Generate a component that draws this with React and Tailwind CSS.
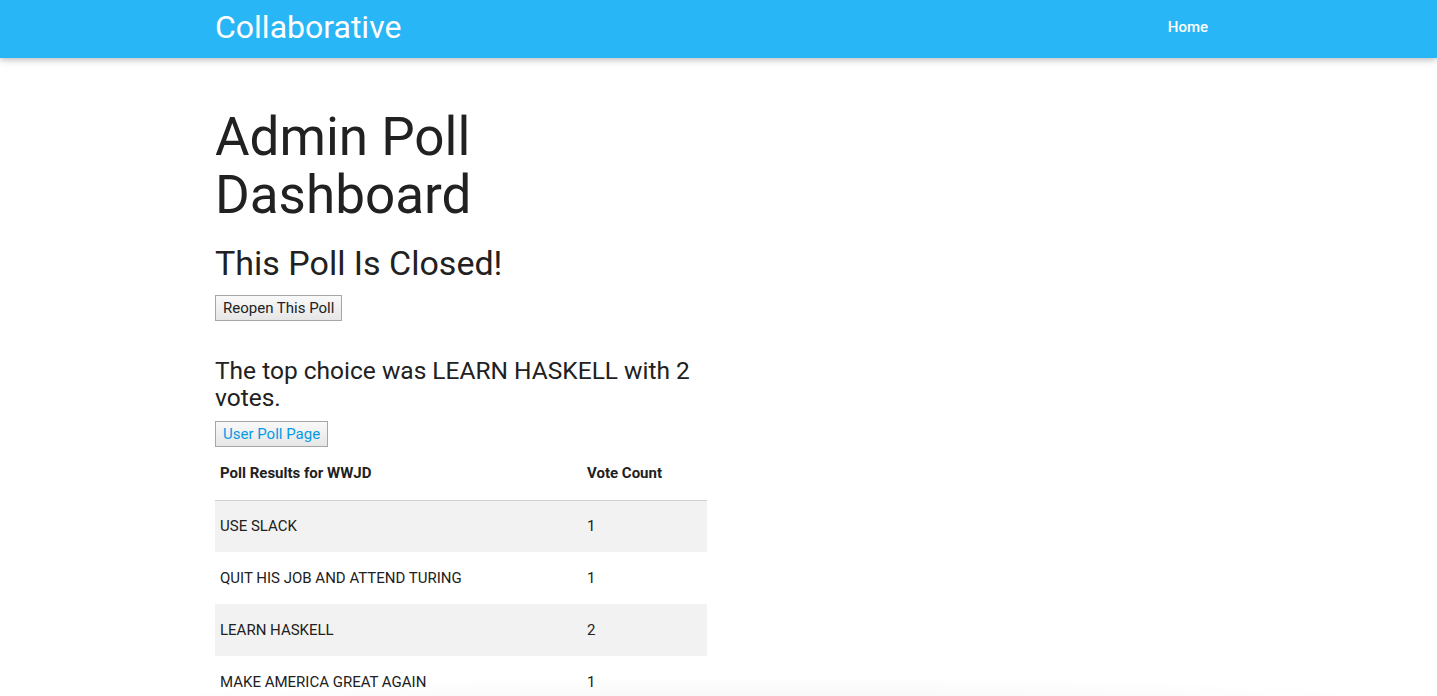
import React from "react";

const rows = [
  ["USE SLACK", "1"],
  ["QUIT HIS JOB AND ATTEND TURING", "1"],
  ["LEARN HASKELL", "2"],
  ["MAKE AMERICA GREAT AGAIN", "1"],
];

export default function App() {
  return (
    <div className="min-h-screen bg-white text-[#212121]" style={{ fontFamily: "Roboto, 'Noto Sans', sans-serif" }}>
      <nav className="h-[58px] bg-[#29b6f6] shadow-[0_2px_5px_0_rgba(0,0,0,0.16),0_2px_10px_0_rgba(0,0,0,0.12)]">
        <div className="mx-auto flex h-full w-[1007px] items-center justify-between pb-[4px]">
          <a className="text-[32px] leading-[48px] text-white">Collaborative</a>
          <a className="mr-[14px] text-[15px] font-medium text-white">Home</a>
        </div>
      </nav>

      <main className="mx-auto w-[1007px]">
        <div className="w-[492px]">
          <h1 className="mt-[50px] w-[300px] text-[53px] font-normal leading-[58px]">Admin Poll Dashboard</h1>
          <h4 className="mt-[19px] text-[34px] font-normal leading-[40px]">This Poll Is Closed!</h4>
          <button className="mt-[12px] h-[26px] border border-[#a6a6a6] bg-gradient-to-b from-[#f9f9f9] to-[#e6e6e6] px-[7px] text-[15px] text-[#222]">
            Reopen This Poll
          </button>
          <h5 className="mt-[36px] text-[24.5px] font-normal leading-[27px]">
            The top choice was LEARN HASKELL with 2 votes.
          </h5>
          <button className="mt-[10px] h-[26px] border border-[#a6a6a6] bg-gradient-to-b from-[#f9f9f9] to-[#e6e6e6] px-[7px] text-[15px] text-[#039be5]">
            User Poll Page
          </button>
          <table className="w-full border-collapse text-[15px]">
            <thead>
              <tr className="h-[53px] border-b border-[#d0d0d0]">
                <th className="w-[367px] px-[5px] text-left font-bold">Poll Results for WWJD</th>
                <th className="px-[5px] text-left font-bold">Vote Count</th>
              </tr>
            </thead>
            <tbody>
              {rows.map((r, i) => (
                <tr key={i} className={i % 2 === 0 ? "h-[52px] bg-[#f2f2f2]" : "h-[52px] bg-white"}>
                  <td className="px-[5px]">{r[0]}</td>
                  <td className="px-[5px]">{r[1]}</td>
                </tr>
              ))}
            </tbody>
          </table>
        </div>
      </main>

      <div className="pointer-events-none fixed bottom-[-30px] left-[130px] h-[50px] w-[1280px] rounded-[50%] bg-[radial-gradient(ellipse_at_center,rgba(0,0,0,0.035),rgba(0,0,0,0)_70%)]" />
    </div>
  );
}
